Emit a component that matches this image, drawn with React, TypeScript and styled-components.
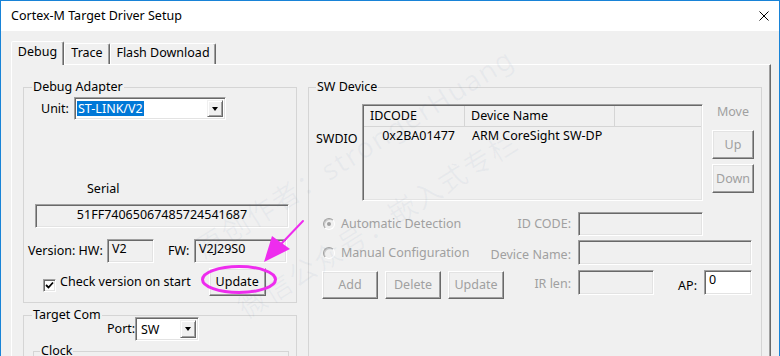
import React from 'react';
import styled, { createGlobalStyle } from 'styled-components';

const GlobalStyle = createGlobalStyle`
  * { box-sizing: border-box; }
  html, body { margin: 0; padding: 0; background: #f0f0f0; }
  body {
    font-family: "Noto Sans", "Noto Sans CJK SC", sans-serif;
    font-size: 12.5px;
    line-height: 16px;
    color: #000;
  }
`;

const Window = styled.div`
  position: relative;
  width: 780px;
  height: 356px;
  overflow: hidden;
  border: 1px solid #1883d7;
  border-bottom: none;
  background: #f0f0f0;
`;

const TitleBar = styled.div`
  height: 30px;
  background: #fff;
  display: flex;
  align-items: center;
  justify-content: space-between;
  padding: 0 10px;
`;

const Body = styled.div`
  padding: 10px 8px 0 10px;
`;

const TabRow = styled.div`
  display: flex;
  align-items: flex-end;
  height: 23px;
`;

const Tab = styled.div<{ $w: number; $active?: boolean }>`
  position: relative;
  z-index: 2;
  width: ${p => p.$w}px;
  height: ${p => (p.$active ? 24 : 21)}px;
  margin-bottom: ${p => (p.$active ? -1 : 0)}px;
  padding-top: ${p => (p.$active ? 2 : 1)}px;
  text-align: center;
  background: #f0f0f0;
  border: 1px solid;
  border-bottom: none;
  border-color: #fff #696969 transparent #fff;
  border-radius: 2px 2px 0 0;
  box-shadow: inset -1px 0 #a0a0a0;
`;

const Panel = styled.div`
  height: 300px;
  border: 1px solid;
  border-color: #fff #696969 #696969 #fff;
  box-shadow: inset -1px -1px #a0a0a0;
  padding: 22px 8px 0 11px;
  display: grid;
  grid-template-columns: 274px 454px;
  column-gap: 11px;
  align-items: start;
`;

const Column = styled.div`
  display: flex;
  flex-direction: column;
`;

const Frame = styled.div<{ $h: number; $top?: number; $left?: number; $right?: number }>`
  height: ${p => p.$h}px;
  margin: ${p => p.$top ?? 0}px ${p => p.$right ?? 0}px 0 ${p => p.$left ?? 0}px;
  border: 1px solid #d5d5d5;
  display: flex;
  flex-direction: column;
`;

const Caption = styled.div<{ $x?: number }>`
  align-self: flex-start;
  margin: -9px 0 0 ${p => p.$x ?? 8}px;
  padding: 0 1px;
  background: #f0f0f0;
  line-height: 16px;
`;

const Row = styled.div<{ $top: number; $left?: number; $h?: number }>`
  display: flex;
  align-items: center;
  margin-top: ${p => p.$top}px;
  padding-left: ${p => p.$left ?? 0}px;
  height: ${p => (p.$h ? `${p.$h}px` : 'auto')};
`;

const Label = styled.span<{ $w?: number; $dim?: boolean }>`
  flex: none;
  width: ${p => (p.$w ? `${p.$w}px` : 'auto')};
  color: ${p => (p.$dim ? '#a0a0a0' : '#000')};
  white-space: nowrap;
`;

const Field = styled.div<{ $w: number; $h: number; $white?: boolean; $center?: boolean; $pt?: number }>`
  flex: none;
  width: ${p => p.$w}px;
  height: ${p => p.$h}px;
  border: 1px solid;
  border-color: #a0a0a0 #fff #fff #a0a0a0;
  box-shadow: inset 1px 1px #696969, inset -1px -1px #e3e3e3;
  background: ${p => (p.$white ? '#fff' : '#f0f0f0')};
  padding: ${p => p.$pt ?? 1}px 4px 0;
  text-align: ${p => (p.$center ? 'center' : 'left')};
  white-space: nowrap;
`;

const Combo = styled.div<{ $w: number; $h: number }>`
  flex: none;
  width: ${p => p.$w}px;
  height: ${p => p.$h}px;
  display: flex;
  align-items: stretch;
  background: #fff;
  border: 1px solid;
  border-color: #a0a0a0 #fff #fff #a0a0a0;
  box-shadow: inset 1px 1px #696969, inset -1px -1px #e3e3e3;
  padding: 2px;
`;

const ComboValue = styled.div<{ $selected?: boolean }>`
  flex: 1;
  display: flex;
  align-items: center;
  padding-left: ${p => (p.$selected ? 0 : 2)}px;
  span {
    padding: 0 1px;
    line-height: 15px;
    background: ${p => (p.$selected ? '#0078d7' : 'transparent')};
    color: ${p => (p.$selected ? '#fff' : '#000')};
  }
`;

const DropButton = styled.div`
  width: 16px;
  flex: none;
  display: flex;
  align-items: center;
  justify-content: center;
  background: #f0f0f0;
  border: 1px solid;
  border-color: #f0f0f0 #696969 #696969 #f0f0f0;
  box-shadow: inset 1px 1px #fff, inset -1px -1px #a0a0a0;
  &::after {
    content: '';
    border-left: 3.5px solid transparent;
    border-right: 3.5px solid transparent;
    border-top: 4px solid #000;
  }
`;

const Button = styled.button<{ $w: number; $h: number; $dim?: boolean; $ml?: number; $mt?: number }>`
  flex: none;
  width: ${p => p.$w}px;
  height: ${p => p.$h}px;
  margin: ${p => p.$mt ?? 0}px 0 0 ${p => p.$ml ?? 0}px;
  padding: 0;
  font: inherit;
  line-height: 16px;
  color: ${p => (p.$dim ? '#a0a0a0' : '#000')};
  background: #f0f0f0;
  border: 1px solid;
  border-color: #fff #696969 #696969 #fff;
  box-shadow: inset -1px -1px #a0a0a0, inset 1px 1px #e3e3e3;
`;

const CheckBox = styled.span`
  flex: none;
  width: 13px;
  height: 13px;
  margin: 6px 4px 0 0;
  background: #fff;
  border: 1px solid;
  border-color: #a0a0a0 #fff #fff #a0a0a0;
  box-shadow: inset 1px 1px #696969, inset -1px -1px #e3e3e3;
  display: flex;
  align-items: center;
  justify-content: center;
`;

const ListView = styled.div`
  flex: none;
  width: 341px;
  height: 97px;
  border: 1px solid;
  border-color: #a0a0a0 #fff #fff #a0a0a0;
  box-shadow: inset 1px 1px #696969, inset -1px -1px #e3e3e3;
  padding: 1px;
  background: #f0f0f0;
`;

const ListHead = styled.div`
  display: flex;
  height: 21px;
  border-bottom: 1px solid #d5d5d5;
`;

const HeadCell = styled.div<{ $w?: number }>`
  width: ${p => (p.$w ? `${p.$w}px` : 'auto')};
  flex: ${p => (p.$w ? 'none' : 1)};
  padding: 2px 0 0 6px;
  border-right: ${p => (p.$w ? '1px solid #d5d5d5' : 'none')};
`;

const ListRow = styled.div`
  display: flex;
  padding-top: 1px;
`;

const Cell = styled.div<{ $w: number; $right?: boolean }>`
  width: ${p => p.$w}px;
  flex: none;
  text-align: ${p => (p.$right ? 'right' : 'left')};
  padding: ${p => (p.$right ? '0 10px 0 0' : '0 0 0 7px')};
  white-space: nowrap;
`;

const DeviceTop = styled.div`
  display: flex;
  align-items: flex-start;
  margin-top: 9px;
  padding-left: 7px;
`;

const SideLabel = styled.span`
  width: 46px;
  flex: none;
  margin-top: 27px;
`;

const MoveColumn = styled.div`
  width: 42px;
  margin-left: 9px;
  display: flex;
  flex-direction: column;
  align-items: center;
  color: #a0a0a0;
`;

const ConfigGrid = styled.div`
  display: grid;
  grid-template-columns: 248px 174px;
  grid-template-rows: 24px 25px 29px;
  column-gap: 7px;
  row-gap: 4px;
  margin-top: 11px;
  padding-left: 14px;
`;

const ConfigLeft = styled.div`
  display: flex;
  align-items: center;
  justify-content: space-between;
`;

const ConfigRight = styled.div`
  display: flex;
  align-items: flex-start;
  justify-content: space-between;
`;

const Option = styled.span`
  display: flex;
  align-items: center;
  gap: 6px;
  color: #a0a0a0;
`;

const RadioDot = styled.span<{ $on?: boolean }>`
  width: 12px;
  height: 12px;
  border-radius: 50%;
  border: 1px solid;
  border-color: #a0a0a0 #fff #fff #a0a0a0;
  box-shadow: inset 1px 1px #c8c8c8;
  background: #f0f0f0;
  display: flex;
  align-items: center;
  justify-content: center;
  &::after {
    content: '';
    width: 4px;
    height: 4px;
    border-radius: 50%;
    background: ${p => (p.$on ? '#a0a0a0' : 'transparent')};
  }
`;

const ButtonGroup = styled.div`
  display: flex;
  gap: 7px;
  align-self: flex-start;
`;

const Overlay = styled.svg`
  position: absolute;
  left: -1px;
  top: -1px;
  pointer-events: none;
  z-index: 5;
`;

const Watermark = styled.span<{ $x: number; $y: number }>`
  position: absolute;
  left: ${p => p.$x}px;
  top: ${p => p.$y - 30}px;
  font-size: 28px;
  line-height: 30px;
  letter-spacing: 1.5px;
  white-space: nowrap;
  color: rgba(90, 120, 160, 0.06);
  transform: rotate(-32deg);
  transform-origin: 0 100%;
  pointer-events: none;
  z-index: 4;
`;

function CloseIcon() {
  return (
    <svg width="10" height="10" viewBox="0 0 10 10">
      <path d="M0.5 0.5 L9.5 9.5 M9.5 0.5 L0.5 9.5" stroke="#000" strokeWidth="1" />
    </svg>
  );
}

function Check() {
  return (
    <svg width="9" height="9" viewBox="0 0 9 9">
      <path d="M1 4 L3.5 6.5 L8 1.5" stroke="#000" strokeWidth="1.8" fill="none" />
    </svg>
  );
}

export default function App() {
  return (
    <>
      <GlobalStyle />
      <Window>
        <TitleBar>
          <span>Cortex-M Target Driver Setup</span>
          <CloseIcon />
        </TitleBar>
        <Body>
          <TabRow>
            <Tab $w={53} $active>Debug</Tab>
            <Tab $w={46}>Trace</Tab>
            <Tab $w={106}>Flash Download</Tab>
          </TabRow>
          <Panel>
            <Column>
              <Frame $h={216}>
                <Caption>Debug Adapter</Caption>
                <Row $top={2} $left={17}>
                  <Label $w={33}>Unit:</Label>
                  <Combo $w={152} $h={23}>
                    <ComboValue $selected><span>ST-LINK/V2</span></ComboValue>
                    <DropButton />
                  </Combo>
                </Row>
                <Row $top={61} $left={63}>
                  <Label>Serial</Label>
                </Row>
                <Row $top={7} $left={11}>
                  <Field $w={254} $h={24} $center $pt={2}>51FF74065067485724541687</Field>
                </Row>
                <Row $top={11} $left={4}>
                  <Label $w={79}>Version: HW:</Label>
                  <Field $w={47} $h={24}>V2</Field>
                  <Label $w={26} style={{ marginLeft: 14 }}>FW:</Label>
                  <Field $w={93} $h={24}>V2J29S0</Field>
                </Row>
                <Row $top={5} $left={19} $h={28}>
                  <CheckBox><Check /></CheckBox>
                  <Label>Check version on start</Label>
                  <Button $w={57} $h={28} $ml={18}>Update</Button>
                </Row>
              </Frame>
              <Frame $h={80} $top={12}>
                <Caption>Target Com</Caption>
                <Row $top={-6} $left={83}>
                  <Label $w={28}>Port:</Label>
                  <Combo $w={64} $h={24}>
                    <ComboValue><span>SW</span></ComboValue>
                    <DropButton />
                  </Combo>
                </Row>
                <Frame $h={40} $top={10} $left={9} $right={7}>
                  <Caption $x={6}>Clock</Caption>
                </Frame>
              </Frame>
            </Column>
            <Column>
              <Frame $h={290}>
                <Caption $x={7}>SW Device</Caption>
                <DeviceTop>
                  <SideLabel>SWDIO</SideLabel>
                  <ListView>
                    <ListHead>
                      <HeadCell $w={101}>IDCODE</HeadCell>
                      <HeadCell $w={150}>Device Name</HeadCell>
                      <HeadCell />
                    </ListHead>
                    <ListRow>
                      <Cell $w={101} $right>0x2BA01477</Cell>
                      <Cell $w={150}>ARM CoreSight SW-DP</Cell>
                    </ListRow>
                  </ListView>
                  <MoveColumn>
                    <span>Move</span>
                    <Button $w={42} $h={29} $dim $mt={10}>Up</Button>
                    <Button $w={42} $h={29} $dim $mt={5}>Down</Button>
                  </MoveColumn>
                </DeviceTop>
                <ConfigGrid>
                  <ConfigLeft>
                    <Option><RadioDot $on />Automatic Detection</Option>
                    <Label $dim>ID CODE:</Label>
                  </ConfigLeft>
                  <ConfigRight>
                    <Field $w={125} $h={24} />
                  </ConfigRight>
                  <ConfigLeft>
                    <Option><RadioDot />Manual Configuration</Option>
                    <Label $dim style={{ marginTop: 4 }}>Device Name:</Label>
                  </ConfigLeft>
                  <ConfigRight>
                    <Field $w={174} $h={25} />
                  </ConfigRight>
                  <ConfigLeft>
                    <ButtonGroup>
                      <Button $w={56} $h={28} $dim $ml={-1} $mt={2}>Add</Button>
                      <Button $w={56} $h={28} $dim $mt={2}>Delete</Button>
                      <Button $w={56} $h={28} $dim $mt={2}>Update</Button>
                    </ButtonGroup>
                    <Label $dim>IR len:</Label>
                  </ConfigLeft>
                  <ConfigRight>
                    <Field $w={76} $h={25} style={{ marginTop: 1 }} />
                    <Row $top={1}>
                      <Label style={{ marginTop: 7, marginRight: 7 }}>AP:</Label>
                      <Field $w={48} $h={25} $white>0</Field>
                    </Row>
                  </ConfigRight>
                </ConfigGrid>
              </Frame>
            </Column>
          </Panel>
        </Body>

        <Watermark $x={205} $y={262}>原创作者：strongerHuang</Watermark>
        <Watermark $x={247} $y={322}>微信公众号：嵌入式专栏</Watermark>

        <Overlay width="780" height="356" viewBox="0 0 780 356">
          <ellipse cx="239" cy="279.5" rx="36.5" ry="13" fill="none" stroke="#ee2cee" strokeWidth="3" />
          <path d="M303 221 L282 243" stroke="#ee2cee" strokeWidth="2" strokeLinecap="round" />
          <path d="M264 262 L272 236 L290 249 Z" fill="#ee2cee" />
        </Overlay>
      </Window>
    </>
  );
}
